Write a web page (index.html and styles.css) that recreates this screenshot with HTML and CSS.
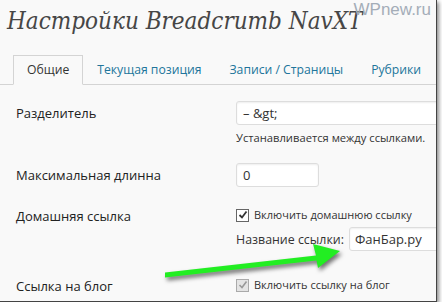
FILE: index.html
```html
<!DOCTYPE html>
<html lang="ru">
<head>
    <meta charset="UTF-8">
    <title>Настройки Breadcrumb NavXT</title>
    <link rel="stylesheet" href="styles.css">
</head>
<body>
    <div class="frame">
        <span class="watermark">WPnew.ru</span>

        <h2 class="page-title">Настройки Breadcrumb NavXT</h2>

        <!-- Вкладки -->
        <ul class="tabs">
            <li class="tab active">Общие</li>
            <li class="tab">Текущая позиция</li>
            <li class="tab">Записи / Страницы</li>
            <li class="tab">Рубрики</li>
        </ul>

        <!-- Настройки -->
        <div class="row row-sep">
            <div class="label">Разделитель</div>
            <div class="field">
                <div class="input input-wide">&ndash; &amp;gt;</div>
                <p class="desc">Устанавливается между ссылками.</p>
            </div>
        </div>

        <div class="row row-max">
            <div class="label">Максимальная длинна</div>
            <div class="field">
                <div class="input input-small">0</div>
            </div>
        </div>

        <div class="row row-home">
            <div class="label label-check">Домашняя ссылка</div>
            <div class="field">
                <div class="check-line">
                    <span class="checkbox">
                        <svg width="10" height="10" viewBox="0 0 10 10"><path d="M1.5 5 L4 7.5 L8.5 1.5" fill="none" stroke="#333" stroke-width="1.8"/></svg>
                    </span>
                    Включить домашнюю ссылку
                </div>
                <div class="name-line">
                    <span class="name-label">Название ссылки:</span>
                    <div class="input input-name">ФанБар.ру</div>
                </div>
            </div>
        </div>

        <div class="row row-blog">
            <div class="label label-check">Ссылка на блог</div>
            <div class="field">
                <div class="check-line">
                    <span class="checkbox disabled">
                        <svg width="10" height="10" viewBox="0 0 10 10"><path d="M1.5 5 L4 7.5 L8.5 1.5" fill="none" stroke="#999" stroke-width="1.6"/></svg>
                    </span>
                    Включить ссылку на блог
                </div>
            </div>
        </div>

        <!-- Зелёная стрелка -->
        <svg class="arrow" width="436" height="301" viewBox="0 0 436 301">
            <polygon points="165,272.5 316,255.5 313,244 340,251 318,268 316.5,260.5 165,277.5" fill="#22ee22"/>
        </svg>
    </div>
</body>
</html>
```

FILE: styles.css
```css
/* Базовые стили */
* {
    margin: 0;
    padding: 0;
    box-sizing: border-box;
}

body {
    background: #fff;
    font-family: 'Open Sans', sans-serif;
    color: #333;
}

/* Рамка скриншота */
.frame {
    position: relative;
    width: 437px;
    height: 302px;
    background: #f9f9f9;
    border-right: 1px solid #444;
    border-bottom: 1px solid #444;
    box-shadow: 2px 2px 4px rgba(0, 0, 0, 0.45);
    overflow: hidden;
    white-space: nowrap;
}

.watermark {
    position: absolute;
    top: 0;
    right: 5px;
    font-family: 'Liberation Sans', sans-serif;
    font-size: 17px;
    color: #a4adb8;
}

.page-title {
    font-family: 'DejaVu Serif', serif;
    font-stretch: condensed;
    font-style: italic;
    font-weight: normal;
    font-size: 24px;
    color: #464646;
    padding: 5px 0 0 7px;
    height: 55px;
    line-height: 32px;
}

/* Вкладки */
.tabs {
    display: flex;
    list-style: none;
    padding-left: 13px;
    border-bottom: 1px solid #d4d4d4;
    height: 30px;
}

.tab {
    font-size: 12.2px;
    line-height: 28px;
    padding: 0 13px;
    border: 1px solid transparent;
    color: #21759b;
    flex-shrink: 0;
}

.tab.active {
    border-color: #d4d4d4;
    border-bottom-color: #f9f9f9;
    background: #f9f9f9;
    color: #333;
    height: 30px;
}

/* Строки формы */
.row {
    display: flex;
    align-items: flex-start;
}

.label {
    width: 236px;
    flex-shrink: 0;
    padding-left: 16px;
    font-size: 13px;
    line-height: 24px;
    color: #222;
}

.label-check {
    line-height: 20px;
}

.row-sep { margin-top: 16px; }
.row-max { margin-top: 18px; }
.row-home { margin-top: 19px; }
.row-blog { margin-top: 25px; }

.input {
    height: 24px;
    background: #fff;
    border: 1px solid #ddd;
    border-radius: 3px;
    box-shadow: inset 0 1px 2px rgba(0, 0, 0, 0.07);
    font-size: 13px;
    line-height: 22px;
    padding: 0 6px;
    color: #333;
    flex-shrink: 0;
}

.input-wide { width: 260px; }
.input-small { width: 83px; }
.input-name { width: 120px; }

.desc {
    font-size: 11.2px;
    line-height: 14px;
    margin-top: 6px;
    color: #333;
}

.check-line {
    display: flex;
    align-items: center;
    gap: 5px;
    font-size: 11px;
    line-height: 18px;
    color: #333;
}

.checkbox {
    display: flex;
    align-items: center;
    justify-content: center;
    width: 13px;
    height: 13px;
    background: #fff;
    border: 1px solid #666;
}

.checkbox.disabled {
    background: #e4e4e4;
    border-color: #aaa;
}

.name-line {
    display: flex;
    align-items: center;
    gap: 5px;
    margin-top: 3px;
}

.name-label {
    font-size: 12.4px;
    color: #333;
    flex-shrink: 0;
}

.name-line .input {
    padding-left: 5px;
}

/* Стрелка поверх формы */
.arrow {
    position: absolute;
    top: 0;
    left: 0;
    filter: drop-shadow(2px 3px 2px rgba(0, 0, 0, 0.55));
}
```
